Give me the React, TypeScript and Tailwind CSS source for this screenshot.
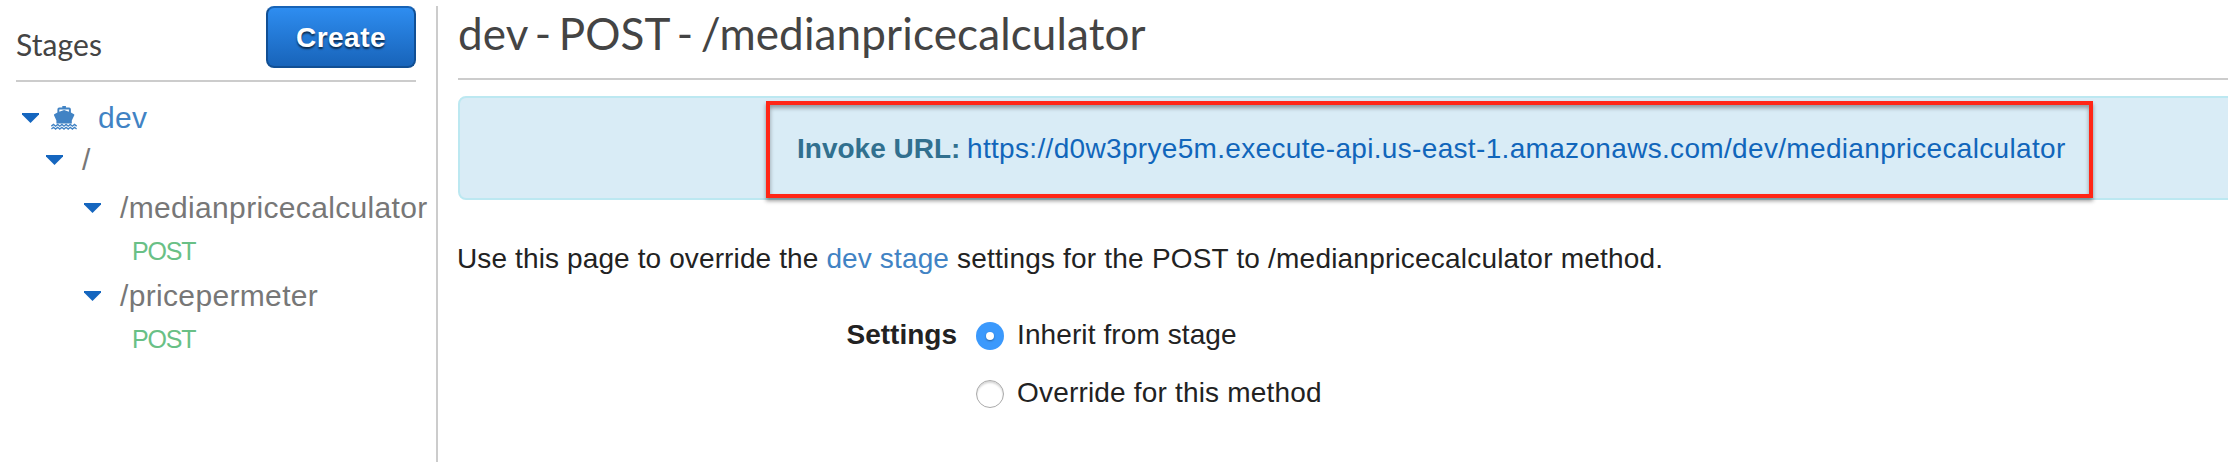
function Caret() {
  return (
    <svg width="17" height="10" viewBox="0 0 17 10" className="shrink-0 fill-[#1566bf]">
      <path d="M0 0H17V1.6L8.5 10L0 1.6Z" />
    </svg>
  );
}

function Ship() {
  return (
    <svg width="26" height="24" viewBox="0 0 26 24" className="shrink-0 fill-[#4183c4]">
      <path d="M11.3 0h3.6v1.6h3.2q1.8 0 1.8 1.8v3.2l3.1 1.6q.6.4.3 1.1L20.8 14.5v3.1H5.4V14.5L3 9.3q-.3-.7.3-1.1l3.1-1.6V3.4q0-1.8 1.8-1.8h3.1zM8.3 3.6v2.2l4.8-1.7 4.8 1.7V3.6z" />
      <path
        d="M.4 20.2l2.100-1.700 2.100 1.700 2.100-1.700 2.100 1.700 2.100-1.700 2.100 1.700 2.100-1.700 2.100 1.700 2.100-1.700 2.100 1.700 2.100-1.700 2.100 1.700M.4 23l2.100-1.700L4.600 23l2.100-1.700L8.800 23l2.100-1.700L13 23l2.100-1.700 2.100 1.700 2.100-1.700 2.100 1.700 2.100-1.700L25.600 23"
        className="fill-none stroke-[#4183c4] stroke-[1.4]"
      />
    </svg>
  );
}

function Resource({ path }: { path: string }) {
  return (
    <div className="flex h-10 items-center gap-[19px] pl-[84px] text-[30px] leading-10 tracking-[0.34px] text-[#777]">
      <Caret />
      <span>{path}</span>
    </div>
  );
}

function Method({ name }: { name: string }) {
  return <div className="mt-[3px] h-10 pl-[132px] text-[25px] leading-10 tracking-[-1.2px] text-[#69c086]">{name}</div>;
}

function Sidebar() {
  return (
    <aside className="mt-1.5 w-[438px] shrink-0 border-r-2 border-[#ccc]">
      <div className="mx-4 mr-5 flex h-[76px] items-start justify-between border-b-2 border-[#ccc]">
        <h2 className="pt-5 font-[Lato,sans-serif] text-[30px] leading-9 tracking-[0.1px] text-[#444]">Stages</h2>
        <button className="h-[62px] w-[150px] rounded-lg border-2 border-[#114f94] border-t-[#1763b6] bg-linear-to-b from-[#2e8df0] to-[#1864ba] pt-px text-[28px] leading-[58px] font-bold tracking-[0.5px] text-white [text-shadow:0_2px_2px_rgba(0,0,0,0.65)]">
          Create
        </button>
      </div>
      <div className="mt-4 flex h-10 items-center pl-[22px] text-[30px] leading-10 tracking-[0.3px] text-[#4183c4]">
        <Caret />
        <span className="mr-[21px] ml-3">
          <Ship />
        </span>
        <span>dev</span>
      </div>
      <div className="mt-0.5 mb-2 flex h-10 items-center gap-[19px] pl-[46px] text-[30px] leading-10 text-[#777]">
        <Caret />
        <span>/</span>
      </div>
      <Resource path="/medianpricecalculator" />
      <Method name="POST" />
      <div className="h-[5px]" />
      <Resource path="/pricepermeter" />
      <Method name="POST" />
    </aside>
  );
}

function Radio({ checked }: { checked?: boolean }) {
  return checked ? (
    <span className="mt-px flex size-7 items-center justify-center rounded-full bg-[#3b99fc]">
      <span className="size-2 rounded-full bg-white shadow-[0_1px_2px_rgba(0,0,0,0.35)]" />
    </span>
  ) : (
    <span className="mt-px size-7 rounded-full border border-[#aaa] bg-white shadow-[inset_0_2px_2px_rgba(0,0,0,0.16)]" />
  );
}

export default function App() {
  return (
    <div className="flex h-[462px] w-full overflow-hidden bg-white font-['Liberation_Sans',Arial,sans-serif]">
      <Sidebar />
      <main className="ml-5 min-w-0 flex-1 overflow-hidden text-[28px] leading-10 text-[#222]">
        <h1 className="h-20 border-b-2 border-[#ccc] pt-[3px] font-[Lato,sans-serif] text-[44px] leading-[60px] tracking-[0.13px] text-[#444] [word-spacing:-4px]">
          dev - POST - /medianpricecalculator
        </h1>
        <div className="mt-4 -mr-4 h-[104px] rounded-lg border-2 border-[#bce8f1] bg-[#d9ecf6] pt-[3px] pl-[306px]">
          <div className="flex h-[97px] w-[1327px] border-4 border-[#ff2616] pt-6 pl-[27px] whitespace-nowrap shadow-[0_3px_4px_rgba(0,0,0,0.4),inset_0_3px_4px_rgba(0,0,0,0.35)]">
            <strong className="w-[170px] text-[#31708f]">Invoke URL:</strong>
            <a className="tracking-[0.329px] text-[#1166bb]">
              https://d0w3prye5m.execute-api.us-east-1.amazonaws.com/dev/medianpricecalculator
            </a>
          </div>
        </div>
        <p className="mt-[39px] ml-[-1px] whitespace-nowrap">
          <span className="tracking-[0.12px]">Use this page to override the </span>
          <a className="tracking-[0.14px] text-[#4183c4]">dev stage</a>
          <span className="tracking-[0.2px]"> settings for the POST to /medianpricecalculator method.</span>
        </p>
        <div className="mt-9 flex">
          <div className="w-[499px] text-right font-bold">Settings</div>
          <div className="ml-[19px] flex flex-col gap-[18px]">
            <label className="flex items-center gap-[13px]">
              <Radio checked />
              <span className="tracking-[0.1px]">Inherit from stage</span>
            </label>
            <label className="flex items-center gap-[13px]">
              <Radio />
              <span className="tracking-[0.18px]">Override for this method</span>
            </label>
          </div>
        </div>
      </main>
    </div>
  );
}
